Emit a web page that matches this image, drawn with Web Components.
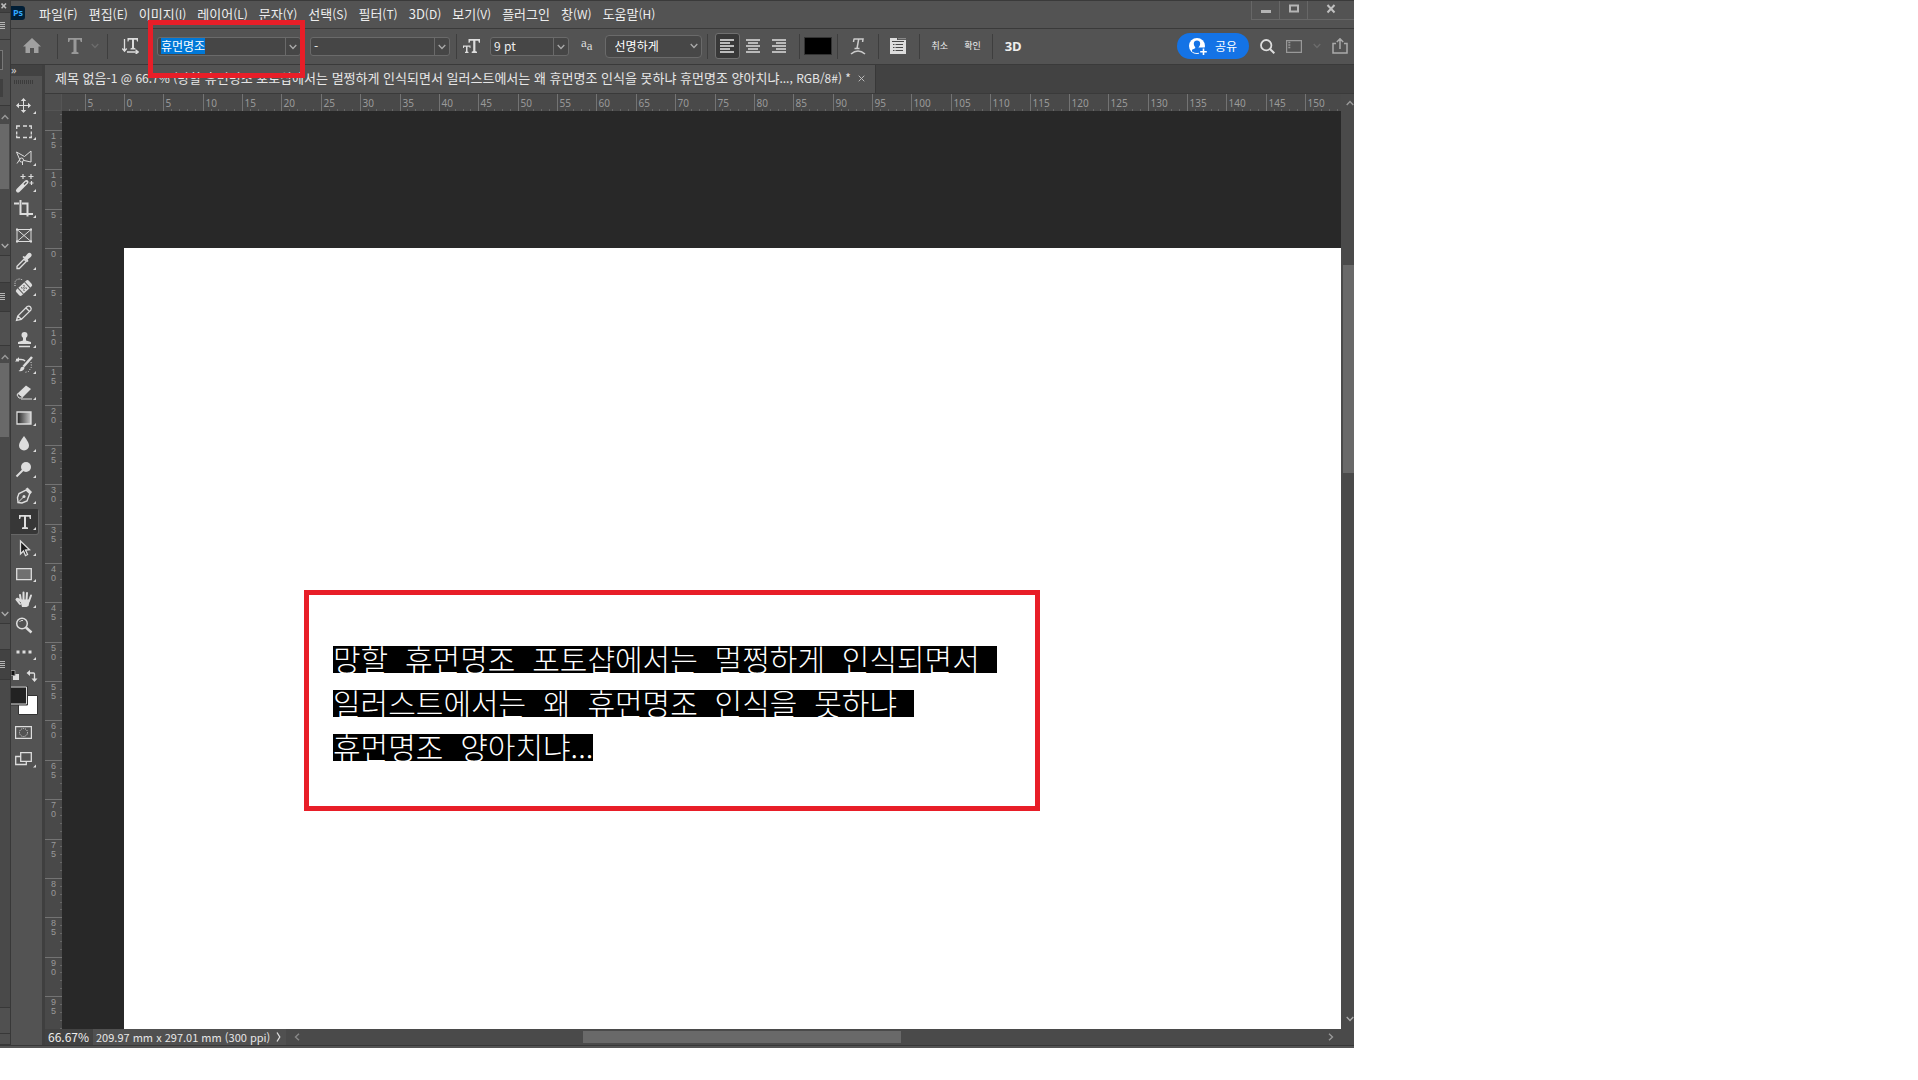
<!DOCTYPE html>
<html lang="ko">
<head>
<meta charset="utf-8">
<title>제목 없음-1</title>
<style>
  html, body {
    height: 100%;
    margin: 0;
    background: #fff;
  }

  body {
    display: grid;
    grid-template-columns: 1354fr 564fr;
    grid-template-rows: 1048fr 32fr;
    font-family: "Noto Sans CJK KR", "Noto Sans", sans-serif;
    font-size: 12px;
    color: #e6e6e6;
  }
</style>
</head>
<body>
<ps-app></ps-app>

<script>
const icons = {
  home: [18, 16, '<path d="M9 0 0 8.500h2.500V15h4.500v-5h4v5h4.500V8.500H18z" fill="#a0a0a0"/>'],
  type: [14, 16, '<path d="M0 0h14v4h-1.200l-.8-2.300H8.500v12.100l2 .7V16h-7v-1.500l2-.7V1.700H2L1.200 4H0z" fill="#999"/>'],
  orient: [17, 16, '<path d="M5.500 0H16v3.500h-1L14.500 1.800H12v8l1.500.6V11.500h-5v-1.100l1.500-.6v-8H7L6.500 3.500h-1z" fill="#ddd"/><path d="M2.500 1v12M.3 10.500l2.200 2.700 2.200-2.700M5 14h11M13.500 11.800l2.700 2.200-2.700 2.200" stroke="#ddd" stroke-width="1.300" fill="none"/>'],
  chev: [8, 6, '<path d="M.7 1 4 4.500 7.300 1" stroke="#aaa" stroke-width="1.300" fill="none"/>'],
  chevDim: [8, 6, '<path d="M.7 1 4 4.500 7.300 1" stroke="#6c6c6c" stroke-width="1.300" fill="none"/>'],
  up: [8, 6, '<path d="M.7 5 4 1.500 7.300 5" stroke="#999" stroke-width="1.400" fill="none"/>'],
  left: [6, 8, '<path d="M5 .7 1.500 4 5 7.300" stroke="#888" stroke-width="1.400" fill="none"/>'],
  right: [6, 8, '<path d="M1 .7 4.500 4 1 7.300" stroke="#999" stroke-width="1.400" fill="none"/>'],
  info: [5, 10, '<path d="M1 .5 3.800 5 1 9.500" stroke="#ddd" stroke-width="1.300" fill="none"/>'],
  size: [18, 14, '<path d="M5.500 0H17v3.800h-1.100l-.6-2H12.400v10.300l1.600.6V14H8.700v-1.300l1.500-.6V1.800H7.200l-.6 2H5.500z" fill="#ddd"/><path d="M0 6.500h7.500V9h-.8l-.3-1.200H4.500v4.700l1 .4V14H2v-1.100l1-.4V7.800H1.100L.8 9H0z" fill="#ddd"/>'],
  alignL: [15, 14, '<path d="M0 1h14M0 4h10M0 7h14M0 10h10M0 13h14" stroke="#e8e8e8" stroke-width="1.600"/>'],
  alignC: [15, 14, '<path d="M0 1h14M2 4h10M0 7h14M2 10h10M0 13h14" stroke="#ddd" stroke-width="1.600"/>'],
  alignR: [15, 14, '<path d="M0 1h14M4 4h10M0 7h14M4 10h10M0 13h14" stroke="#ddd" stroke-width="1.600"/>'],
  warp: [16, 17, '<path d="M3.500 1h9.500l-.4 3M4 1l-.5 3M8.700 1 7 10.500M4.500 10.500h5" stroke="#ccc" stroke-width="1.500" fill="none"/><path d="M1 16q7-6 14 0" stroke="#ccc" stroke-width="1.600" fill="none"/>'],
  panels: [17, 16, '<path d="M0 0h7v2h9v14H0z" fill="#ddd"/><path d="M8 .6h8" stroke="#888" stroke-width="1.200"/><path d="M2 3.500h12M3 6.500h1.500M5.500 6.500H13M3 9.500h1.500M5.500 9.500H13M3 12.500h1.500M5.500 12.500H13" stroke="#484848" stroke-width="1.200"/>'],
  user: [18, 17, '<circle cx="8" cy="8" r="8" fill="#fff"/><path d="M8 2.500c4 0 3.800 4.500 1.800 6.500v1.200l3.200 1.600v1.700q-5 3-10 0v-1.700l3.200-1.600V9C4.200 7 4 2.500 8 2.500z" fill="#1473e6"/><path d="M10 9.500h8V17h-8z" fill="#1473e6"/><path d="M14.500 10.500V17M11.200 13.700h6.600" stroke="#fff" stroke-width="1.600"/>'],
  search: [15, 15, '<circle cx="6.200" cy="6.200" r="5.200" stroke="#ddd" stroke-width="1.800" fill="none"/><path d="m10 10 4.300 4.300" stroke="#ddd" stroke-width="2"/>'],
  workspace: [16, 13, '<path d="M.6.600h14.800v11.800H.6z" stroke="#999" stroke-width="1.200" fill="none"/><path d="M2.300 2.500h2M2.300 5h2M2.300 7.500h2" stroke="#999" stroke-width="1.600"/>'],
  export: [16, 16, '<path d="M4 5.500H1V15h14V5.500h-3M8 11V1M4.800 4 8 .8 11.200 4" stroke="#aaa" stroke-width="1.500" fill="none"/>'],
  min: [10, 12, '<path d="M0 8h10v3H0z" fill="#b4b4b4"/>'],
  max: [10, 12, '<path d="M1 3.500h8v6H1z" stroke="#b4b4b4" stroke-width="2" fill="none"/>'],
  close: [10, 12, '<path d="m1.500 3 7 7.500m0-7.500-7 7.500" stroke="#c0c0c0" stroke-width="2"/>'],
  tabClose: [7, 7, '<path d="m.7.700 5.600 5.600m0-5.600L.7 6.300" stroke="#bbb" stroke-width="1"/>'],
  lines: [6, 8, '<path d="M0 .5h5M0 2.500h5M0 4.500h5M0 6.500h5" stroke="#b4b4b4"/>'],
  cross: [6, 6, '<path d="m.5.500 4.500 4.800M5 .5.500 5.300" stroke="#bbb" stroke-width="1.600"/>'],
};

// 28x26 cells, one for each row of the tool panel
const tools = [
  ['이동', '<path d="M12.500 6v13M6 12.500h13"/><path d="m12.500 5 2.700 3h-5.400zM12.500 20l2.700-3h-5.400zM5 12.500l3-2.700v5.400zM20 12.500l-3-2.700v5.400z" class="f"/>'],
  ['선택 윤곽', '<path d="M9 7H5.700v3m0 2.500v3m0 1v2H9M12 7h4m2 0h2.300v3m0 2.500v3m0 1v2H18m-2 0h-4" stroke-width="1.300"/>'],
  ['다각형 올가미', '<path d="m6 18.500 2.700-4L5.500 7l8 4.500L20 6v11l-7-1.500"/><circle cx="10.500" cy="15" r="2"/><path d="M11.500 17v3"/>'],
  ['자동 선택', '<path d="m7 19.500 8.500-8.500" stroke-width="4" stroke-linecap="round"/><path d="m13 13.500 2.500-2.500" stroke="#535353" stroke-width="1.500"/><path d="M12 3v5M9.500 5.500h5M20 3v5M17.500 5.500h5M20.500 10v4M18.500 12h4" stroke-width="1.200"/>'],
  ['자르기', '<path d="M9.500 3v14H19M3 6.500h5M11 6.500h5.500v13M17 17h5" stroke-width="2"/>'],
  ['프레임', '<path d="M6 6.500h14v12H6zM6 6.500l14 12M20 6.500l-14 12"/><path d="M5 5.500h2v2H5zM19 5.500h2v2h-2zM5 17.500h2v2H5zM19 17.500h2v2h-2z" class="f"/>'],
  ['스포이드', '<path d="M6 19.500v-2.300l7-7 2.300 2.300-7 7z" stroke-width="1.300"/><path d="m11.500 8 1-1 1.500.8 2.500-3q2-1.800 3.500-.3t-.3 3.500l-3 2.500.8 1.500-1 1z" class="f"/>'],
  ['복구 브러시', '<g transform="rotate(-43 13 13)"><rect x="4.500" y="9" width="17" height="8" rx="2" class="f"/><path d="M8.500 9v8M17.500 9v8" stroke="#535353"/><path d="M11 11.500h1M14 11.500h1M12.500 13h1M11 14.500h1M14 14.500h1" stroke="#444" stroke-width="1.500"/></g><path d="M4 11V7q1-3 5-3l3 1" stroke-dasharray="1 1.200"/>'],
  ['연필', '<path d="m5.500 19.500 1.200-4.500 9.500-9.500q2-1 3.300.5t.3 3.200l-9.500 9.300zM15 7l3.300 3.300M7 15l3.300 3.300" stroke-width="1.300"/>'],
  ['도장', '<circle cx="13.500" cy="8" r="3" class="f"/><path d="M12 10h3v3.500l5 1.500v2H7v-2l5-1.500z" class="f"/><path d="M8 19.500h11" stroke-width="1.500"/>'],
  ['작업 내역 브러시', '<path d="m21 4-8.500 9.500" stroke-width="2.500"/><path d="M12.800 13.500q1.500 1.500-.5 3.500t-4.800 1q2-.8 2-2.500t3.300-2z" class="f"/><path d="M5 6.500h5q3 0 4 1.500" stroke-width="1.500"/><path d="m4 8.500 4-4.500v4.500z" class="f"/><path d="m20 9 .5 5-3 4.500-4 1" stroke-dasharray="1 1.500"/>'],
  ['지우개', '<path d="m6 15 9-8.500 5 3.500-8.500 8.500H8z" class="f"/><path d="m7 14.500 4.500 3.500-1 1H8L6 16z" fill="#535353" stroke="#ddd"/><path d="M10 20h11"/>'],
  ['그레이디언트', '<path d="M6 7h14v12H6z" fill="url(#g)" stroke-width="1.300"/>'],
  ['흐림', '<path d="M13 5q5 6.500 5 9.500a5 5 0 0 1-10 0Q8 11.500 13 5z" class="f"/>'],
  ['닷지', '<circle cx="15" cy="10" r="5" class="f"/><path d="m5.500 19.500 7-7" stroke-width="2"/>'],
  ['펜', '<path d="m7 19.500-.5-5 1.500-4 7-3.500 3.800 3.500L16 18l-5 2z" stroke-width="1.400"/><path d="m14.500 6 2-1.500 4.500 4.500-1.500 2z" class="f"/><path d="m7 19.500 5.500-5.500"/><circle cx="13" cy="13.500" r="1.500" class="f"/>'],
  ['가로쓰기 문자', '<path d="M8 6h12v4h-1.200l-.6-2.200H15V18l2 .6V20h-6v-1.400l2-.6V7.800H9.800L9.200 10H8z" class="f"/>', 'on'],
  ['패스 선택', '<path d="M9.500 6v13l3-3 2 4.500 2-1-2-4.500 4-.3z" fill="#1c1c1c" stroke-width="1.300"/>'],
  ['사각형', '<path d="M5.700 7.700h14.600v11H5.700z" fill="#707070" stroke-width="1.300"/>'],
  ['손', '<path d="m9 17-3.500-4.500q.5-1.500 2-.3L9.500 14M10 14 9 8M12.500 13V5.500M15.500 13l.5-7M18 14l2-5.500" stroke-width="2" stroke-linecap="round"/><path d="M9 12.500h10l-1.500 6.500-2 1h-4.500z" class="f"/>'],
  ['돋보기', '<circle cx="11" cy="10.500" r="5.300" stroke-width="1.500"/><path d="M8.500 9q1-2 3.500-1.500"/><path d="m15 14.500 5.500 5" stroke-width="2.500"/>'],
  ['도구 모음 편집', '<path d="M5.500 11.500h3v3h-3zM11.500 11.500h3v3h-3zM17.500 11.500h3v3h-3z" class="f"/>'],
];
const noCorner = [5, 20];

function define(tag, html, setup) {
  customElements.define(tag, class extends HTMLElement {
    constructor() {
      super();
      this.attachShadow({ mode: 'open' });
    }

    connectedCallback() {
      const template = document.createElement('template');
      template.innerHTML = typeof html === 'function' ? html(this) : html;
      this.shadowRoot.replaceChildren(template.content.cloneNode(true));
      if (setup) setup(this.shadowRoot, this);
    }
  });
}

define('ps-icon', (el) => {
  const [w, h, body] = icons[el.getAttribute('name')];
  return `
    <style>:host { display: inline-flex; flex: none; }</style>
    <svg width="${w}" height="${h}" viewBox="0 0 ${w} ${h}" aria-hidden="true">${body}</svg>`;
});

define('ps-menu-bar', `
  <style>
    :host {
      display: flex;
      height: 27px;
      border-top: 1px solid #3a3a3a;
      border-bottom: 1px solid #3a3a3a;
      background: #535353;
    }
    .logo {
      width: 14px;
      height: 14px;
      margin: 5px 8px 0 0;
      border-radius: 0 3px 3px 0;
      background: #001e36;
      color: #31a8ff;
      font: bold 9px/14px "Noto Sans", sans-serif;
      text-align: center;
    }
    nav { display: flex; flex: 1; }
    nav button {
      padding: 0 5px 2px 6px;
      border: 0;
      background: none;
      color: #eee;
      font: 13px/24px "Noto Sans CJK KR", sans-serif;
      white-space: nowrap;
    }
    small { font-size: 12px; }
    .win { display: flex; height: 18px; border: 1px solid #676767; border-width: 0 0 1px 1px; }
    .win button {
      width: 28px;
      padding: 0 0 1px;
      border: 0;
      border-right: 1px solid #676767;
      background: none;
    }
    .win button:last-child { width: 46px; border: 0; }
  </style>
  <div class="logo">Ps</div>
  <nav></nav>
  <div class="win">
    <button aria-label="최소화"><ps-icon name="min"></ps-icon></button>
    <button aria-label="최대화"><ps-icon name="max"></ps-icon></button>
    <button aria-label="닫기"><ps-icon name="close"></ps-icon></button>
  </div>
`, (root) => {
  const names = ['파일(F)', '편집(E)', '이미지(I)', '레이어(L)', '문자(Y)', '선택(S)', '필터(T)',
    '3D(D)', '보기(V)', '플러그인', '창(W)', '도움말(H)'];
  root.querySelector('nav').innerHTML = names
    .map((n) => `<button>${n.replace(/\(.\)/, '<small>$&</small>')}</button>`).join('');
});

define('ps-combo', (el) => `
  <style>
    :host {
      display: flex;
      box-sizing: border-box;
      height: 19px;
      border: 1px solid #6a6a6a;
      border-radius: 3px;
      background: #464646;
    }
    input {
      flex: 1;
      min-width: 0;
      box-sizing: border-box;
      padding: 0 3px;
      border: 0;
      outline: 0;
      background: none;
      color: #eee;
      font: 12px/16px "Noto Sans CJK KR", sans-serif;
    }
    input::selection { background: #0078d7; color: #fff; }
    button {
      width: 15px;
      padding: 0;
      border: 0;
      border-left: 1px solid #6a6a6a;
      background: none;
      line-height: 10px;
    }
  </style>
  <input aria-label="${el.getAttribute('label')}" value="${el.getAttribute('value')}">
  <button aria-label="${el.getAttribute('label')} 목록"><ps-icon name="chev"></ps-icon></button>
`, (root, el) => {
  if (!el.hasAttribute('selected')) return;
  const input = root.querySelector('input');
  input.focus();
  input.select();
});

define('ps-options-bar', `
  <style>
    :host {
      display: flex;
      align-items: center;
      height: 34px;
      padding-bottom: 1px;
      border-bottom: 1px solid #3a3a3a;
      background: #535353;
    }
    .group {
      display: flex;
      align-items: center;
      height: 25px;
      padding: 0 6px;
      border-right: 1px solid #3e3e3e;
    }
    .grow { flex: 1; border: 0; }
    .end { padding-right: 6px; border: 0; gap: 11px; }
    button {
      display: inline-flex;
      align-items: center;
      justify-content: center;
      padding: 0;
      border: 0;
      background: none;
      color: #eee;
      font: 9px/16px "Noto Sans CJK KR", sans-serif;
      white-space: nowrap;
    }
    .pick {
      position: relative;
      display: flex;
      align-items: center;
      margin-left: 12px;
    }
    .pick ps-icon { position: absolute; right: 4px; pointer-events: none; }
    select {
      appearance: none;
      width: 97px;
      height: 23px;
      padding: 0 9px;
      border: 1px solid #6a6a6a;
      border-radius: 4px;
      background: #474747;
      color: #fff;
      font: 12px/20px "Noto Sans CJK KR", sans-serif;
    }
    .aa { margin-left: 12px; font: 13px/14px "Liberation Serif", serif; color: #ddd; }
    .aa sup { font-size: 13px; line-height: 0; vertical-align: 3px; }
    .align button { width: 25px; height: 26px; box-sizing: border-box; }
    .align .on { border: 1px solid #707070; border-radius: 3px; background: #383838; }
    .color { width: 28px; height: 18px; border: 1px solid #333; background: #000; }
    .three { margin-left: 12px; font: bold 13px/16px "Open Sans", sans-serif; }
    .share {
      width: 72px;
      height: 26px;
      gap: 8px;
      border-radius: 13px;
      background: #1473e6;
      color: #fff;
      font-size: 12px;
    }
  </style>
  <div class="group" style="padding: 0 16px 0 12px"><button aria-label="홈"><ps-icon name="home"></ps-icon></button></div>
  <div class="group" style="padding: 0 8px 0 10px; gap: 9px">
    <button aria-label="문자 도구"><ps-icon name="type"></ps-icon></button><ps-icon name="chevDim"></ps-icon>
  </div>
  <div class="group">
    <button aria-label="텍스트 방향 켜기/끄기" style="margin: 0 18px 0 8px"><ps-icon name="orient"></ps-icon></button>
    <ps-combo label="글꼴" value="휴먼명조" selected style="width: 144px; margin-right: 9px"></ps-combo>
    <ps-combo label="글꼴 스타일" value="-" style="width: 140px"></ps-combo>
  </div>
  <div class="group" style="padding: 0 5px 0 6px">
    <ps-icon name="size"></ps-icon>
    <ps-combo label="글꼴 크기" value="9 pt" style="width: 79px; margin-left: 9px"></ps-combo>
    <span class="aa"><sup>a</sup>a</span>
    <span class="pick">
      <select aria-label="앤티 앨리어스"><option>선명하게</option></select>
      <ps-icon name="chev"></ps-icon>
    </span>
  </div>
  <div class="group align" style="padding: 0 7px; gap: 1px">
    <button class="on" aria-label="왼쪽 정렬"><ps-icon name="alignL"></ps-icon></button>
    <button aria-label="가운데 정렬"><ps-icon name="alignC"></ps-icon></button>
    <button aria-label="오른쪽 정렬"><ps-icon name="alignR"></ps-icon></button>
  </div>
  <div class="group" style="padding: 0 5px 0 4px"><button class="color" aria-label="텍스트 색상"></button></div>
  <div class="group" style="padding: 0 12px"><button aria-label="뒤틀어진 텍스트"><ps-icon name="warp"></ps-icon></button></div>
  <div class="group" style="padding: 0 12px 0 11px"><button aria-label="문자 및 단락 패널"><ps-icon name="panels"></ps-icon></button></div>
  <div class="group" style="padding: 0 11px 0 12px; gap: 16px"><button>취소</button><button>확인</button></div>
  <div class="group grow" style="padding: 0"><button class="three">3D</button></div>
  <div class="group end">
    <button class="share"><ps-icon name="user"></ps-icon>공유</button>
    <button aria-label="검색"><ps-icon name="search"></ps-icon></button>
    <button aria-label="작업 영역"><ps-icon name="workspace"></ps-icon></button>
    <ps-icon name="chevDim"></ps-icon>
    <button aria-label="내보내기"><ps-icon name="export"></ps-icon></button>
  </div>
`);

define('ps-tool-panel', `
  <style>
    :host {
      display: block;
      width: 31px;
      border-right: 3px solid #3f3f3f;
      background: #535353;
    }
    .head {
      height: 11px;
      background: #424242;
      color: #ccc;
      font: 11px/9px "Noto Sans", sans-serif;
    }
    .grip {
      width: 19px;
      height: 4px;
      margin: 4px 0 9px 3px;
      background: repeating-linear-gradient(90deg, #3c3c3c 0 1px, transparent 1px 2px);
    }
    button {
      display: block;
      width: 28px;
      height: 26px;
      padding: 0;
      border: 0;
      background: none;
    }
    .on { background: #373737; box-shadow: inset -1px -1px #666; border-radius: 0 2px 2px 0; }
    svg { display: block; fill: none; stroke: #ddd; }
    .f { fill: #ddd; stroke: none; }
  </style>
  <div class="head">»</div>
  <div class="grip"></div>
  <div class="list"></div>
  <svg width="30" height="120" viewBox="0 0 30 120">
    <path d="M2 9h6v6H2z" fill="#ddd" stroke="none"/><path d="M0 5.500h4v5H0z" fill="#111" stroke="#888"/>
    <path d="M18 8h4.500q1 0 1 1v5" stroke-width="1.300"/><path d="m15.500 8 3.500-3v6zM23.500 17l-3-3.500h6z" class="f"/>
    <path d="M7.500 30.500h19v19h-19z" fill="#fff" stroke="#333"/>
    <path d="M-1 21.500h17.500v18.500H-1z" fill="#333" stroke="#333"/><path d="M-1 22h16.500v17H-1z" fill="#222"/>
    <path d="M4.600 61.600h15.800v11.800H4.600z" stroke-width="1.200"/><circle cx="12.500" cy="67.500" r="4" stroke-dasharray="1 1"/>
    <path d="M10 91.500H4.700v8h10.600V97M9.700 87.700h10.600v8.600H9.700z" stroke-width="1.300"/><path d="M25 99.500v3h-3z" class="f"/>
  </svg>
`, (root) => {
  root.querySelector('.list').innerHTML = tools.map(([name, body, on], i) => `
    <button class="${on || ''}" aria-label="${name}">
      <svg width="28" height="26" viewBox="0 0 28 26">
        <linearGradient id="g"><stop stop-color="#222"/><stop offset="1" stop-color="#ccc"/></linearGradient>
        ${body}${noCorner.includes(i) ? '' : '<path d="M25 18v3h-3z" class="f"/>'}
      </svg>
    </button>`).join('');
});

// zero is the pixel where the paper starts; a label stands at every 5 mm
define('ps-ruler', `
  <style>
    :host { display: block; overflow: hidden; background: #494949; }
    svg { display: block; }
    text { fill: #999; font: 10px "Noto Sans", sans-serif; }
    :host([vertical]) text { font: 9px "Liberation Sans", sans-serif; }
  </style>
`, (root, el) => {
  const vertical = el.hasAttribute('vertical');
  const zero = Number(el.getAttribute('zero'));
  const last = Number(el.getAttribute('last'));
  const perMm = 23.622 / 3;
  const first = -Math.floor(zero / perMm);
  let out = '';
  for (let mm = first; mm <= last; mm += 1) {
    const at = Math.round(zero + mm * perMm) + 0.5;
    const major = mm % 5 === 0;
    const from = major ? 0 : 15;
    const stroke = major ? '#737373' : '#666';
    out += vertical
      ? `<path d="M${from} ${at}H17" stroke="${stroke}"/>`
      : `<path d="M${at} ${from}V17" stroke="${stroke}"/>`;
    if (major) {
      const label = String(Math.abs(mm));
      out += vertical
        ? [...label].map((d, i) => `<text x="6" y="${at + 8 + i * 9}">${d}</text>`).join('')
        : `<text x="${at + 2}" y="13">${label}</text>`;
    }
  }
  const length = Math.ceil(zero + last * perMm) + 2;
  root.innerHTML += vertical
    ? `<svg width="17" height="${length}">${out}</svg>`
    : `<svg width="${length}" height="17">${out}</svg>`;
});

define('ps-scrollbar', `
  <style>
    :host { display: flex; align-items: center; background: #4a4a4a; }
    :host([vertical]) { flex-direction: column; }
  </style>
  <slot></slot>
`);

define('ps-side-strip', `
  <style>
    :host {
      display: flex;
      flex-direction: column;
      width: 10px;
      overflow: hidden;
      border-right: 1px solid #383838;
      background: #505050;
    }
    div { display: flex; flex: none; box-sizing: border-box; border-bottom: 1px solid #383838; }
    .head { align-items: center; background: #424242; }
    .track { flex-direction: column; justify-content: space-between; align-items: center; background: #4a4a4a; }
    .thumb { width: 9px; border: 0; background: #696969; align-self: flex-start; }
    .field { width: 3px; height: 20px; margin: 10px 0 9px; border: 1px solid #777; border-left: 0; background: #444; }
    .chip { width: 3px; height: 18px; border: 0; background: #404040; }
  </style>
  <div class="head" style="height: 13px; padding-left: 1px"><ps-icon name="cross"></ps-icon></div>
  <div class="head" style="height: 27px; background: #505050"><ps-icon name="lines"></ps-icon></div>
  <div style="height: 66px; flex-direction: column"><div class="field"></div><div class="chip"></div></div>
  <div class="track" style="height: 150px; padding: 8px 0 6px">
    <ps-icon name="up"></ps-icon><div class="thumb" style="height: 65px; margin-bottom: 50px"></div><ps-icon name="chev"></ps-icon>
  </div>
  <div style="height: 27px"></div>
  <div class="head" style="height: 29px"><ps-icon name="lines"></ps-icon></div>
  <div style="height: 34px"></div>
  <div class="track" style="height: 278px; padding: 8px 0 6px">
    <ps-icon name="up"></ps-icon><div class="thumb" style="height: 74px; margin-bottom: 172px"></div><ps-icon name="chev"></ps-icon>
  </div>
  <div style="height: 26px"></div>
  <div class="head" style="height: 30px"><ps-icon name="lines"></ps-icon></div>
  <div style="flex: 1; background: #494949"></div>
  <div style="height: 26px"></div>
  <div style="height: 11px"></div>
`);

define('ps-document', `
  <style>
    :host { display: grid; grid-template-rows: 29px 17px 1fr 16px; min-width: 0; min-height: 0; }
    .tabs { display: flex; background: #424242; border-bottom: 1px solid #3a3a3a; }
    .tab {
      display: flex;
      align-items: center;
      gap: 7px;
      padding: 0 10px 2px;
      border-right: 1px solid #383838;
      background: #535353;
      white-space: nowrap;
      font-size: 13px;
      line-height: 26px;
    }
    .tab small { font-size: 12px; }
    .tab button { display: flex; padding: 0; border: 0; background: none; }
    .top, .middle, .bottom { display: flex; min-height: 0; }
    .corner { width: 17px; background: #4e4e4e; box-shadow: inset -1px -1px #555; }
    ps-ruler { flex: 1; }
    .middle ps-ruler { flex: 0 0 17px; }
    .cap {
      display: flex;
      justify-content: center;
      align-items: center;
      box-sizing: border-box;
      width: 13px;
      padding-left: 4px;
      background: #4a4a4a;
    }
    .canvas { display: flex; flex: 1; min-width: 0; padding: 137px 0 0 62px; background: #282828; }
    .paper { flex: 1; padding: 342px 0 0 180px; overflow: hidden; background: #fff; }
    .note {
      box-sizing: border-box;
      width: 736px;
      max-width: 100%;
      height: 221px;
      padding: 51px 0 0 24px;
      border: 5px solid #e81e28;
    }
    p { margin: 0; }
    p span {
      display: block;
      width: max-content;
      height: 27px;
      margin-bottom: 17px;
      background: #000;
      color: #fff;
      font: 300 30px/25px "Noto Sans CJK KR", sans-serif;
      white-space: pre;
    }
    ps-scrollbar[vertical] { width: 13px; }
    .vthumb { width: 11px; height: 208px; margin: 154px 0 auto 2px; background: #696969; }
    .bottom { background: #4a4a4a; line-height: 16px; }
    .zoom {
      box-sizing: border-box;
      width: 48px;
      padding: 0 3px;
      border: 0;
      background: #424242;
      color: #eee;
      font: inherit;
    }
    .info {
      display: flex;
      align-items: center;
      gap: 6px;
      padding: 0 5px 0 3px;
      background: #505050;
      font-size: 11px;
      white-space: nowrap;
    }
    .bottom ps-scrollbar { flex: 1; }
    .before, .after { display: flex; align-items: center; box-sizing: border-box; }
    .before { flex: 298 1 0; padding-left: 8px; }
    .hthumb { flex: 328 1 0; height: 12px; background: #696969; }
    .after { flex: 446 1 0; justify-content: flex-end; padding-right: 20px; }
  </style>
  <div class="tabs">
    <div class="tab">
      <span>제목 없음<small>-1 @ 66.7% (</small>망할 휴먼명조 포토샵에서는 멀쩡하게 인식되면서 일러스트에서는 왜 휴먼명조 인식을 못하냐 휴먼명조 양아치냐<small>..., RGB/8#) *</small></span>
      <button aria-label="탭 닫기"><ps-icon name="tabClose"></ps-icon></button>
    </div>
  </div>
  <div class="top">
    <div class="corner"></div>
    <ps-ruler zero="62" last="154"></ps-ruler>
    <div class="cap"><ps-icon name="up"></ps-icon></div>
  </div>
  <div class="middle">
    <ps-ruler vertical zero="137" last="99"></ps-ruler>
    <div class="canvas">
      <div class="paper">
        <div class="note"><p><span>망할  휴먼명조  포토샵에서는  멀쩡하게  인식되면서  </span><span>일러스트에서는  왜  휴먼명조  인식을  못하냐  </span><span>휴먼명조  양아치냐...</span></p></div>
      </div>
    </div>
    <ps-scrollbar vertical>
      <div class="vthumb"></div>
      <ps-icon name="chev" style="margin: 0 0 7px 4px"></ps-icon>
    </ps-scrollbar>
  </div>
  <div class="bottom">
    <input class="zoom" aria-label="확대/축소 비율" value="66.67%">
    <div class="info"><span>209.97 mm x 297.01 mm (300 ppi)</span><ps-icon name="info"></ps-icon></div>
    <ps-scrollbar>
      <div class="before"><ps-icon name="left"></ps-icon></div>
      <div class="hthumb"></div>
      <div class="after"><ps-icon name="right"></ps-icon></div>
    </ps-scrollbar>
  </div>
`);

define('ps-app', `
  <style>
    :host {
      position: relative;
      display: grid;
      grid-template: minmax(0, 1fr) 3px / auto minmax(0, 1fr);
      min-width: 0;
      min-height: 0;
      overflow: hidden;
    }
    .main { display: flex; flex-direction: column; min-width: 0; min-height: 0; }
    .work { display: flex; flex: 1; min-height: 0; }
    ps-document { flex: 1; }
    .edge { grid-column: 1 / -1; border-top: 1px solid #383838; background: #555; }
    /* red marker round the font box, drawn over both bars */
    .marker {
      position: absolute;
      left: 148px;
      top: 20px;
      box-sizing: border-box;
      width: 157px;
      height: 58px;
      border: 5px solid #e81e28;
      pointer-events: none;
    }
  </style>
  <ps-side-strip></ps-side-strip>
  <div class="main">
    <ps-menu-bar></ps-menu-bar>
    <ps-options-bar></ps-options-bar>
    <div class="work">
      <ps-tool-panel></ps-tool-panel>
      <ps-document></ps-document>
    </div>
  </div>
  <div class="edge"></div>
  <div class="marker"></div>
`);
</script>
</body>
</html>
